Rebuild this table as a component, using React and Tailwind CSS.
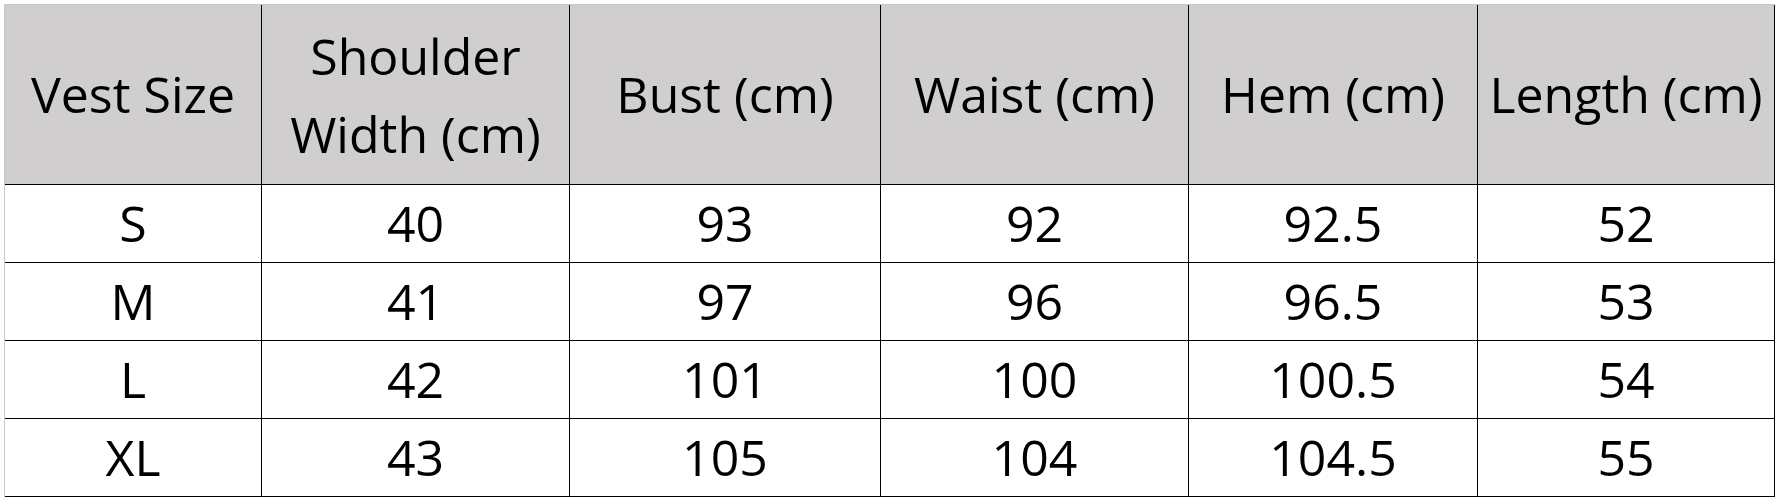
const columns = [
  { key: 'size', label: ['Vest Size'], w: 'w-[257px]' },
  { key: 'shoulder', label: ['Shoulder', 'Width (cm)'], w: 'w-[308px]' },
  { key: 'bust', label: ['Bust (cm)'], w: 'w-[311px]' },
  { key: 'waist', label: ['Waist (cm)'], w: 'w-[308px]' },
  { key: 'hem', label: ['Hem (cm)'], w: 'w-[289px]' },
  { key: 'length', label: ['Length (cm)'], w: 'w-[297px]' },
];

const rows = [
  { size: 'S', shoulder: '40', bust: '93', waist: '92', hem: '92.5', length: '52' },
  { size: 'M', shoulder: '41', bust: '97', waist: '96', hem: '96.5', length: '53' },
  { size: 'L', shoulder: '42', bust: '101', waist: '100', hem: '100.5', length: '54' },
  { size: 'XL', shoulder: '43', bust: '105', waist: '104', hem: '104.5', length: '55' },
];

export default function App() {
  return (
    <div className="w-[1779px] h-[501px] bg-white pl-[4px] pt-[4px] overflow-hidden"
         style={{ fontFamily: '"Open Sans", "Noto Sans", sans-serif' }}>
      <div className="inline-flex flex-col border-l border-t border-[#c6c6c6] text-black text-[50px] font-medium">
        <div className="flex h-[180px]">
          {columns.map((c) => (
            <div key={c.key}
                 className={`${c.w} shrink-0 bg-[#d0cece] border-r border-b border-black flex flex-col items-center justify-center text-center`}>
              {c.label.length > 1 ? (
                c.label.map((l) => <div key={l} className="leading-[78px]">{l}</div>)
              ) : (
                <div>{c.label[0]}</div>
              )}
            </div>
          ))}
        </div>
        {rows.map((r) => (
          <div key={r.size} className="flex h-[78px]">
            {columns.map((c) => (
              <div key={c.key}
                   className={`${c.w} shrink-0 border-r border-b border-black flex items-center justify-center`}>
                {r[c.key]}
              </div>
            ))}
          </div>
        ))}
      </div>
    </div>
  );
}
